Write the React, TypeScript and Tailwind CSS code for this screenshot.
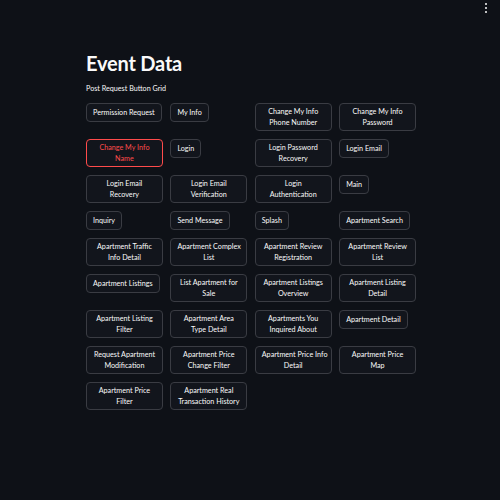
import React from 'react';

type Btn = { lines: string[]; active?: boolean };

const rows: Btn[][] = [
  [
    { lines: ['Permission Request'] },
    { lines: ['My Info'] },
    { lines: ['Change My Info', 'Phone Number'] },
    { lines: ['Change My Info', 'Password'] },
  ],
  [
    { lines: ['Change My Info', 'Name'], active: true },
    { lines: ['Login'] },
    { lines: ['Login Password', 'Recovery'] },
    { lines: ['Login Email'] },
  ],
  [
    { lines: ['Login Email', 'Recovery'] },
    { lines: ['Login Email', 'Verification'] },
    { lines: ['Login', 'Authentication'] },
    { lines: ['Main'] },
  ],
  [
    { lines: ['Inquiry'] },
    { lines: ['Send Message'] },
    { lines: ['Splash'] },
    { lines: ['Apartment Search'] },
  ],
  [
    { lines: ['Apartment Traffic', 'Info Detail'] },
    { lines: ['Apartment Complex', 'List'] },
    { lines: ['Apartment Review', 'Registration'] },
    { lines: ['Apartment Review', 'List'] },
  ],
  [
    { lines: ['Apartment Listings'] },
    { lines: ['List Apartment for', 'Sale'] },
    { lines: ['Apartment Listings', 'Overview'] },
    { lines: ['Apartment Listing', 'Detail'] },
  ],
  [
    { lines: ['Apartment Listing', 'Filter'] },
    { lines: ['Apartment Area', 'Type Detail'] },
    { lines: ['Apartments You', 'Inquired About'] },
    { lines: ['Apartment Detail'] },
  ],
  [
    { lines: ['Request Apartment', 'Modification'] },
    { lines: ['Apartment Price', 'Change Filter'] },
    { lines: ['Apartment Price Info', 'Detail'] },
    { lines: ['Apartment Price', 'Map'] },
  ],
  [
    { lines: ['Apartment Price', 'Filter'] },
    { lines: ['Apartment Real', 'Transaction History'] },
  ],
];

const GridButton: React.FC<{ btn: Btn }> = ({ btn }) => {
  const wide = btn.lines.length > 1;
  return (
    <button
      className={`${wide ? 'w-full' : 'w-fit'} min-h-[19px] px-[6px] py-[2px] rounded-[4px] border bg-[#12151c] text-[7.2px] leading-[11px] text-center whitespace-nowrap ${
        btn.active ? 'border-[#ff4b4b] text-[#ff4b4b]' : 'border-[#3a3c43] text-[#fafafa]'
      }`}
    >
      {btn.lines.map((l, i) => (
        <span key={i} className="block">{l}</span>
      ))}
    </button>
  );
};

export default function App() {
  return (
    <div className="relative w-[500px] h-[500px] bg-[#0e1117] overflow-hidden" style={{ fontFamily: 'Lato, "Noto Sans", sans-serif' }}>
      <div className="absolute top-[2px] right-[12px] text-[#fafafa]">
        <svg width="4" height="12" viewBox="0 0 4 12" fill="currentColor">
          <circle cx="2" cy="2" r="1" />
          <circle cx="2" cy="6" r="1" />
          <circle cx="2" cy="10" r="1" />
        </svg>
      </div>

      <div className="ml-[86px] w-[330px] pt-[50px]">
        <h1 className="text-[20px] leading-[26px] font-bold text-[#fafafa] tracking-[-0.2px]">Event Data</h1>
        <p className="mt-[7px] text-[7.2px] leading-[12px] text-[#fafafa]">Post Request Button Grid</p>

        <div className="mt-[8px] flex flex-col gap-[8px]">
          {rows.map((row, r) => (
            <div key={r} className="grid grid-cols-4 gap-x-[7.5px] items-start">
              {row.map((b, c) => (
                <GridButton key={c} btn={b} />
              ))}
            </div>
          ))}
        </div>
      </div>
    </div>
  );
}
